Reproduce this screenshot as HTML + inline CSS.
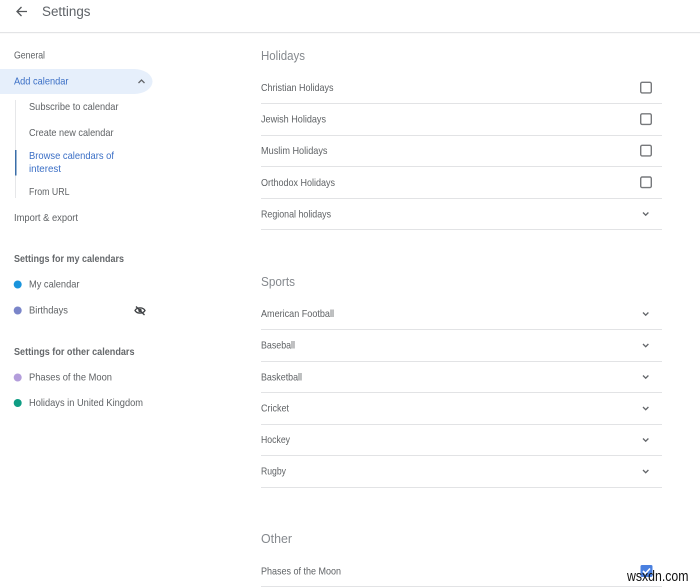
<!DOCTYPE html>
<html><head><meta charset="utf-8"><title>Settings</title>
<style>
html,body{margin:0;padding:0;background:#fff;width:700px;height:587px;overflow:hidden}
svg{display:block;font-family:"Liberation Sans",sans-serif;filter:blur(.3px)}
.t{font-size:10.500px;fill:#5f6265}
.h{font-size:10.300px;fill:#65686b;font-weight:bold}
.g{font-size:13px;fill:#85898e}
.l{stroke:#e2e3e5;stroke-width:1.100;fill:none}
.c{fill:none;stroke:#63666a;stroke-width:1.300}
.cb{fill:none;stroke:#77797c;stroke-width:1.400}
</style></head><body>
<svg width="700" height="587" viewBox="0 0 700 587" xmlns="http://www.w3.org/2000/svg">
<rect width="700" height="587" fill="#fff"/>
<path d="M27 11.500H17M21.500 7L17 11.500L21.500 16" fill="none" stroke="#55585b" stroke-width="1.300"/>
<text x="42" y="16" font-size="13.500" fill="#5f6368" textLength="48.500" lengthAdjust="spacingAndGlyphs">Settings</text>
<rect y="32" width="700" height="1.200" fill="#e3e4e6"/>

<path d="M0 69H134A18.500 12.500 0 0 1 134 94H0Z" fill="#e6effb"/>
<path d="M15.500 100V198" stroke="#e6e7e9" stroke-width="1"/>
<rect x="15" y="150" width="1.500" height="25.500" fill="#3a6ea8"/>
<path d="M138.500 83L141.500 80L144.500 83" class="c"/>

<text class="t" x="14" y="58.500" textLength="31" lengthAdjust="spacingAndGlyphs">General</text>
<text class="t" x="14" y="84.500" textLength="54.500" lengthAdjust="spacingAndGlyphs" style="fill:#3b6fc6">Add calendar</text>
<text class="t" x="29" y="110" textLength="89.500" lengthAdjust="spacingAndGlyphs">Subscribe to calendar</text>
<text class="t" x="29" y="136" textLength="84.500" lengthAdjust="spacingAndGlyphs">Create new calendar</text>
<text class="t" x="29" y="159" textLength="85" lengthAdjust="spacingAndGlyphs" style="fill:#3b6fc6">Browse calendars of</text>
<text class="t" x="29" y="172" textLength="32" lengthAdjust="spacingAndGlyphs" style="fill:#3b6fc6">interest</text>
<text class="t" x="29" y="195" textLength="40.500" lengthAdjust="spacingAndGlyphs">From URL</text>
<text class="t" x="14" y="221" textLength="64" lengthAdjust="spacingAndGlyphs">Import &amp; export</text>

<text class="h" x="14" y="262" textLength="110" lengthAdjust="spacingAndGlyphs">Settings for my calendars</text>
<circle cx="17.700" cy="284.500" r="4" fill="#1a94dc"/>
<text class="t" x="29" y="287.500" textLength="50.500" lengthAdjust="spacingAndGlyphs">My calendar</text>
<circle cx="17.700" cy="310.500" r="4" fill="#7a85c9"/>
<text class="t" x="29" y="313.500" textLength="39" lengthAdjust="spacingAndGlyphs">Birthdays</text>
<path d="M135 310.500C137 307 143 307 145 310.500C143 314 137 314 135 310.500Z" fill="none" stroke="#3f4245" stroke-width="1.300"/>
<circle cx="140" cy="310.500" r="1.700" fill="#3f4245"/>
<path d="M136 306.500L144.500 315" stroke="#3f4245" stroke-width="1.300"/>

<text class="h" x="14" y="355" textLength="120.500" lengthAdjust="spacingAndGlyphs">Settings for other calendars</text>
<circle cx="17.700" cy="377.500" r="4" fill="#b39ddb"/>
<text class="t" x="29" y="380.500" textLength="83" lengthAdjust="spacingAndGlyphs">Phases of the Moon</text>
<circle cx="17.700" cy="403" r="4" fill="#0f9d84"/>
<text class="t" x="29" y="406" textLength="114" lengthAdjust="spacingAndGlyphs">Holidays in United Kingdom</text>

<text class="g" x="261" y="60" textLength="44" lengthAdjust="spacingAndGlyphs">Holidays</text>
<text class="t" x="261" y="91" textLength="72.500" lengthAdjust="spacingAndGlyphs">Christian Holidays</text>
<text class="t" x="261" y="122.500" textLength="65" lengthAdjust="spacingAndGlyphs">Jewish Holidays</text>
<text class="t" x="261" y="154" textLength="66.500" lengthAdjust="spacingAndGlyphs">Muslim Holidays</text>
<text class="t" x="261" y="186" textLength="74" lengthAdjust="spacingAndGlyphs">Orthodox Holidays</text>
<text class="t" x="261" y="217.500" textLength="70" lengthAdjust="spacingAndGlyphs">Regional holidays</text>
<rect class="cb" x="640.700" y="82.300" width="10.600" height="10.600" rx="1.500"/>
<rect class="cb" x="640.700" y="113.800" width="10.600" height="10.600" rx="1.500"/>
<rect class="cb" x="640.700" y="145.300" width="10.600" height="10.600" rx="1.500"/>
<rect class="cb" x="640.700" y="177" width="10.600" height="10.600" rx="1.500"/>
<path class="c" d="M643 212.500L645.700 215.200L648.400 212.500"/>
<path class="l" d="M261 103.500H662M261 135.500H662M261 166.500H662M261 198.500H662M261 229.500H662"/>

<text class="g" x="261" y="286" textLength="34" lengthAdjust="spacingAndGlyphs">Sports</text>
<text class="t" x="261" y="317" textLength="73" lengthAdjust="spacingAndGlyphs">American Football</text>
<text class="t" x="261" y="348.500" textLength="34" lengthAdjust="spacingAndGlyphs">Baseball</text>
<text class="t" x="261" y="380.500" textLength="41" lengthAdjust="spacingAndGlyphs">Basketball</text>
<text class="t" x="261" y="411.500" textLength="28" lengthAdjust="spacingAndGlyphs">Cricket</text>
<text class="t" x="261" y="443" textLength="29" lengthAdjust="spacingAndGlyphs">Hockey</text>
<text class="t" x="261" y="474.500" textLength="25" lengthAdjust="spacingAndGlyphs">Rugby</text>
<path class="c" d="M643 312.500L645.700 315.200L648.400 312.500M643 344L645.700 346.700L648.400 344M643 375.500L645.700 378.200L648.400 375.500M643 407L645.700 409.700L648.400 407M643 438.500L645.700 441.200L648.400 438.500M643 470L645.700 472.700L648.400 470"/>
<path class="l" d="M261 329.500H662M261 361.500H662M261 392.500H662M261 424.500H662M261 455.500H662M261 487.500H662"/>

<text class="g" x="261" y="543" textLength="31" lengthAdjust="spacingAndGlyphs">Other</text>
<text class="t" x="261" y="574.500" textLength="80" lengthAdjust="spacingAndGlyphs">Phases of the Moon</text>
<path class="l" d="M261 586.500H662"/>
<rect x="640.500" y="565" width="12" height="12" rx="1.500" fill="#4a80e0"/>
<path d="M643 571L645.500 573.500L650 568.500" fill="none" stroke="#fff" stroke-width="1.600"/>
<text x="627" y="581" font-size="15" fill="#111" textLength="61.500" lengthAdjust="spacingAndGlyphs">wsxdn.com</text>
</svg>
</body></html>
